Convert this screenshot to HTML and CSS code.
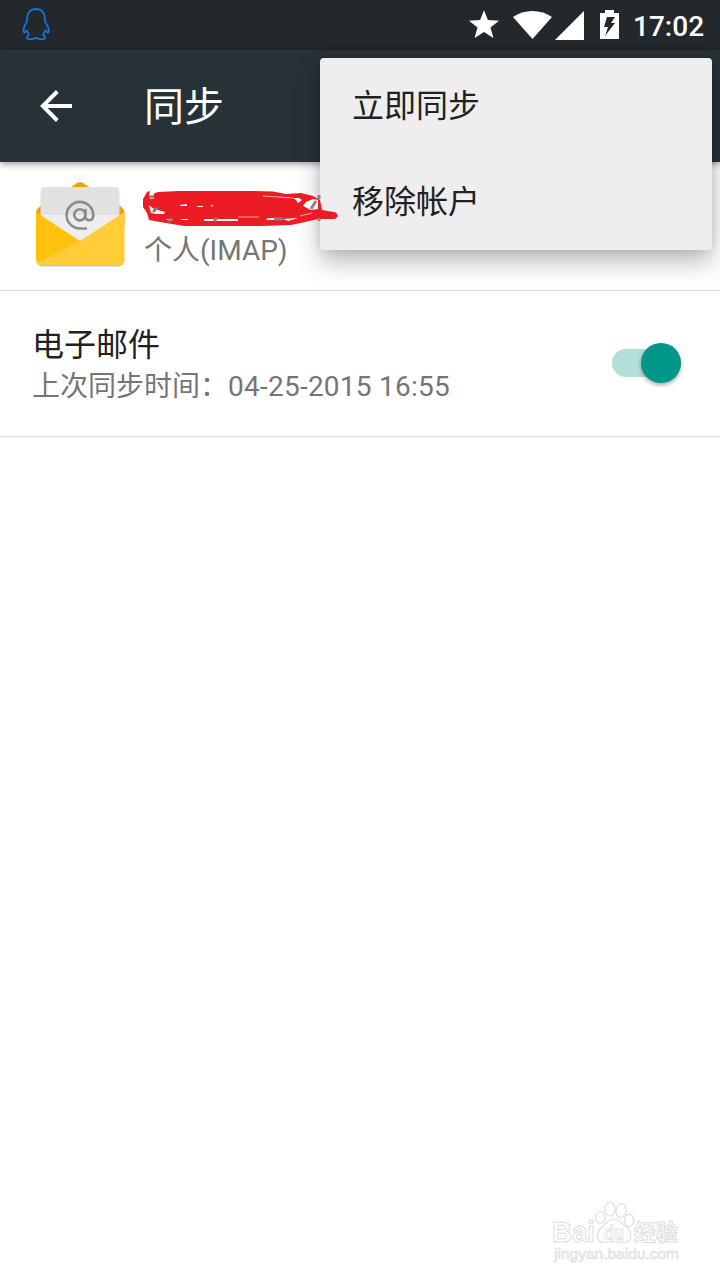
FILE: index.html
```html
<!DOCTYPE html>
<html lang="zh-CN">
<head>
<meta charset="utf-8">
<title>同步</title>
<link rel="stylesheet" href="styles.css">
</head>
<body>
<div class="screen">
  <header class="status-bar">
    <svg class="penguin" width="30" height="34" viewBox="0 0 30 34" fill="none" stroke="#1c71d4" stroke-width="1.800" stroke-linejoin="round">
      <path d="M15 2C9 2 6 6.300 6 11.500L5.800 15C3.500 18.500 2.300 21.500 2.500 24.500L3.500 25.500L6 23.500L8 28C5 29.500 5 31.500 7.500 32C11 32.500 13.500 31.800 14 31H16C16.500 31.800 19 32.500 22.500 32C25 31.500 25 29.500 22 28L24.500 23.500L27 25.500L28 24.500C28 21.500 26.600 18.500 24.200 15L24 11.500C24 6.300 21 2 15 2Z"/>
    </svg>
    <div class="status-right">
      <svg class="star" width="30" height="28" viewBox="0 0 30 28"><path fill="#fff" d="M15 .3L18.900 10.100L30 10.800L21.500 17.500L24.400 28L15 22.100L5.600 28L8.500 17.500L0 10.800L11.100 10.100Z"/></svg>
      <svg class="wifi" width="39" height="28" viewBox="0 0 39 28"><path fill="#fff" d="M0 6C11-2 28-2 39 6L19.500 28Z"/></svg>
      <svg class="signal" width="29" height="29" viewBox="0 0 29 29"><path fill="#fff" d="M0 29L29 0V29Z"/></svg>
      <svg class="battery" width="19" height="29" viewBox="0 0 19 29"><path fill="#fff" fill-rule="evenodd" d="M5 0H14V3H19V29H0V3H5ZM7 7L4 17H8L5 26L15 13H11L15 7Z"/></svg>
      <span class="clock">17:02</span>
    </div>
  </header>
  <div class="app-bar">
    <svg class="back" width="32" height="32" viewBox="0 0 32 32" fill="none" stroke="#fff" stroke-width="3.900"><path d="M32 16H3M17.300 1.500L2.800 16L17.300 30.500"/></svg>
    <h1 class="title">同步</h1>
  </div>
  <main>
    <section class="account">
      <svg class="mail" width="96" height="92" viewBox="0 0 96 92">
        <path fill="#c4c4c4" d="M3.500 78Q3.500 85.500 10 85.500H85Q91.500 85.500 91.500 78Z"/>
        <path fill="#f99b11" d="M3 31Q3 28.500 8 24.500L37.500 6.500L43 2.500Q47 0 51 2.500L56.500 6.500L87 24.500Q91.500 28.500 91.500 31V45H3Z"/>
        <path fill="#e2e2e2" d="M7.500 11Q7.500 6 12.500 6H81.500Q86.500 6 86.500 11V64H7.500Z"/>
        <path fill="#eee" d="M7.500 34H86.500V64H7.500Z"/>
        <path fill="#ffc20e" d="M3 31L47 60L91 84H9Q3 84 3 78Z"/>
        <path fill="#ffcd38" d="M91.500 31V78Q91.500 84 85.500 84H9Q6 84 4.500 82L47 60Z"/>
        <g fill="none" stroke="#8b8b8b" stroke-width="2.600">
          <circle cx="46.800" cy="33.800" r="5.600"/>
          <path d="M52.400 28V35.500C52.400 40.500 60.200 40.500 60.200 35V33.500A13.300 13.300 0 1 0 46.900 47.500H54"/>
        </g>
      </svg>
      <div class="account-text">
        <svg class="redaction" width="198" height="40" viewBox="140 186 198 40">
          <path fill="#ed1c24" d="M147 192L150 191L149 195L152 196L155 193L158 192L179 191L252 191L273 191.500L286 194L301 193L313 196L320 200L322 210L336 212.500L338 216L335 219L318 219L305 222L291 225L260 226L184 226L166 223L149 220L147 213L143 207L143 199Z"/>
          <path fill="#fff" d="M149 197L154 195V199H150ZM151 213L149 205L154 209L165 212L164 214H156ZM165 219L173 219L171 221ZM180 205L187 204V206H180ZM197 206H203V207H197ZM211 204L214 207L211 206ZM181 219H188V220H181ZM204 219H238V221H204ZM266 220L268 218H283V220ZM283 219L298 218L288 221ZM293 198H299L302 200L298 203L296 200ZM303 206L306 202L313 199L318 200V209L311 210Z"/>
          <path fill="none" stroke="#8c8286" stroke-width="3" d="M149 197H154M153 212L157 208M168 221L172 219M214 221L217 218M311 209L316 201M319 195V199M319 218V221M274 219H283"/>
          <path fill="none" stroke="#f3a7aa" stroke-width="1" d="M238 217H259M263 196L293 198M300 216L312 213"/>
        </svg>
        <div class="secondary">个人(IMAP)</div>
      </div>
    </section>
    <section class="sync-row">
      <div>
        <div class="primary">电子邮件</div>
        <div class="secondary">上次同步时间：<span class="sync-time">04-25-2015 16:55</span></div>
      </div>
      <div class="switch"><div class="thumb"></div></div>
    </section>
  </main>
  <nav class="menu">
    <div class="menu-item">立即同步</div>
    <div class="menu-item">移除帐户</div>
  </nav>
  <svg class="watermark" width="150" height="86" viewBox="0 0 150 86">
    <g fill="#fff" stroke="#dedede" stroke-width="1.200">
      <ellipse cx="60.500" cy="25.500" rx="4.700" ry="6"/>
      <ellipse cx="70" cy="17" rx="5" ry="7"/>
      <ellipse cx="81" cy="18.500" rx="5" ry="7" transform="rotate(12 81 18.500)"/>
      <ellipse cx="89" cy="28.500" rx="4.700" ry="6.300"/>
      <path d="M74 27C80 27 82 32 87 36C94 42 91 51 83 50.500C77 49.500 71 49.500 65 50.500C57 51 55 42 61 36C66 32 68 27 74 27Z"/>
    </g>
    <text class="wm-logo" x="12" y="50" textLength="43" lengthAdjust="spacingAndGlyphs">Bai</text>
    <text class="wm-du" x="64" y="47.500" textLength="20" lengthAdjust="spacingAndGlyphs">du</text>
    <text class="wm-cn" x="94" y="48">经验</text>
    <text class="wm-url" x="14" y="66.500" textLength="125" lengthAdjust="spacingAndGlyphs">jingyan.baidu.com</text>
  </svg>
</div>
</body>
</html>
```
FILE: styles.css
```css
* { box-sizing: border-box; }
body { margin: 0; background: #fff; font-family: Roboto, "Noto Sans CJK SC", sans-serif; }
svg { display: block; flex: none; }
.screen { position: relative; width: 720px; height: 1280px; overflow: hidden; background: #fff; }
.status-bar { height: 50px; background: #22282b; display: flex; justify-content: space-between; padding: 0 16px 0 21px; }
.penguin { margin-top: 7px; }
.status-right { display: flex; align-items: flex-start; }
.star { margin: 10px 1px 0 0; }
.wifi { margin: 11px 0 0 13px; }
.signal { margin: 11px 0 0 3px; }
.battery { margin: 10px 0 0 16px; }
.clock { margin-left: 14px; width: 71px; line-height: 54px; font-size: 28px; font-weight: 500; color: #fff; white-space: nowrap; }
.app-bar { position: relative; height: 112px; background: #263238; display: flex; align-items: center; padding-left: 40px; box-shadow: 0 2px 7px rgba(0,0,0,.4); }
.title { margin: 4px 0 0 72px; font-size: 40px; line-height: 58px; font-weight: 400; color: #fff; }
.account { height: 129px; border-bottom: 1px solid #dcdcdc; display: flex; padding: 19px 0 0 33px; }
.account-text { padding: 5px 0 0 11px; }
.redaction { position: relative; z-index: 3; }
.account-text .secondary { margin: 5px 0 0 4px; }
.secondary { font-size: 28px; line-height: 40px; color: #757575; white-space: nowrap; }
.sync-time { letter-spacing: .24px; }
.primary { font-size: 32px; line-height: 44px; color: #212121; }
.sync-row { height: 146px; border-bottom: 1px solid #dcdcdc; display: flex; justify-content: space-between; padding: 32px 39px 0 32px; }
.switch { width: 69px; height: 28px; margin-top: 26px; border-radius: 14px; background: #b2dfdb; display: flex; justify-content: flex-end; align-items: center; }
.thumb { flex: none; width: 40px; height: 40px; border-radius: 50%; background: #009688; box-shadow: 0 2px 4px rgba(0,0,0,.35); }
.menu { position: absolute; z-index: 2; left: 320px; top: 58px; width: 392px; height: 192px; border-radius: 4px; background: #eee; box-shadow: 0 12px 24px rgba(0,0,0,.27), 0 0 10px rgba(0,0,0,.1); }
.menu-item { height: 96px; padding-left: 32px; font-size: 32px; line-height: 97px; color: #212121; }
.watermark { position: absolute; left: 540px; top: 1192px; font-family: "Liberation Sans", "Noto Sans CJK SC", sans-serif; }
.watermark text { fill: #fff; stroke: #dedede; stroke-width: 1; }
.wm-logo { font-size: 29px; font-weight: 700; }
.wm-du { font-size: 21px; font-weight: 700; }
.wm-cn { font-size: 22px; font-weight: 700; }
.watermark .wm-url { font-size: 15px; fill: #f0f0f0; stroke-width: .6; }
```
